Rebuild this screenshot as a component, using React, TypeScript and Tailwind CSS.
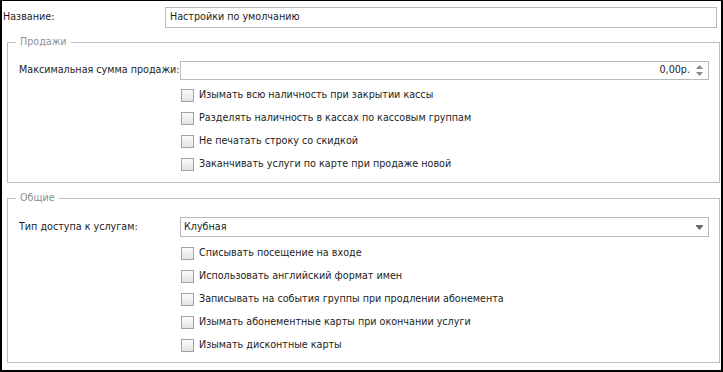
import type { ReactNode } from 'react';

const salesOptions = [
  'Изымать всю наличность при закрытии кассы',
  'Разделять наличность в кассах по кассовым группам',
  'Не печатать строку со скидкой',
  'Заканчивать услуги по карте при продаже новой',
];

const commonOptions = [
  'Списывать посещение на входе',
  'Использовать английский формат имен',
  'Записывать на события группы при продлении абонемента',
  'Изымать абонементные карты при окончании услуги',
  'Изымать дисконтные карты',
];

function CheckRow({ label }: { label: string }) {
  return (
    <div className="flex h-[23px] items-center pl-[162px]">
      <span className="h-[13px] w-[13px] shrink-0 border border-[#a2a2a2] bg-gradient-to-b from-[#fbfbfb] to-[#e4e4e4]" />
      <span className="ml-[5px] whitespace-nowrap">{label}</span>
    </div>
  );
}

function Group({ title, className, children }: { title: string; className: string; children: ReactNode }) {
  return (
    <fieldset className={`ml-[5px] w-[713px] border border-[#bdbdbd] pl-[11px] pr-[8px] ${className}`}>
      <legend className="ml-[-3px] px-[4px] leading-[14px] text-[#8f8f8f]">{title}</legend>
      {children}
    </fieldset>
  );
}

export default function App() {
  return (
    <div className="h-[372px] w-[723px] border-x-2 border-t border-b-2 border-black bg-white font-['DejaVu_Sans',sans-serif] text-[9.6px] text-[#1c1c1c]">
      <div className="mt-[6px] flex h-[21px] items-center">
        <span className="w-[163px] shrink-0 pl-[1px]">Название:</span>
        <div className="flex h-[21px] w-[552px] items-center border border-[#b9b9b9] pl-[4px]">
          Настройки по умолчанию
        </div>
      </div>

      <Group title="Продажи" className="mt-[7px] pb-[6px]">
        <div className="mt-[12px] flex h-[19px] items-center">
          <span className="w-[161px] shrink-0 whitespace-nowrap">Максимальная сумма продажи:</span>
          <div className="flex h-[19px] w-[529px] items-center justify-end border border-[#b9b9b9]">
            <span>0,00р.</span>
            <div className="ml-[5px] mr-[4px] flex w-[9px] flex-col items-center gap-[3px]">
              <svg width="7" height="4" viewBox="0 0 7 4">
                <path d="M3.5 0 L7 4 L0 4 Z" fill="#8a8a8a" />
              </svg>
              <svg width="7" height="4" viewBox="0 0 7 4">
                <path d="M0 0 L7 0 L3.5 4 Z" fill="#8a8a8a" />
              </svg>
            </div>
          </div>
        </div>
        <div className="mt-[4px]">
          {salesOptions.map((o) => (
            <CheckRow key={o} label={o} />
          ))}
        </div>
      </Group>

      <Group title="Общие" className="mt-[8px] pb-[5px]">
        <div className="mt-[12px] flex h-[20px] items-center">
          <span className="w-[161px] shrink-0 whitespace-nowrap">Тип доступа к услугам:</span>
          <div className="flex h-[20px] w-[529px] items-center justify-between border border-[#b9b9b9] pl-[3px] pr-[5px]">
            <span>Клубная</span>
            <svg width="7" height="5" viewBox="0 0 7 5">
              <rect x="0" y="0" width="7" height="1" fill="#6a6a6a" />
              <path d="M0 1 L7 1 L3.5 5 Z" fill="#6a6a6a" />
            </svg>
          </div>
        </div>
        <div className="mt-[5px]">
          {commonOptions.map((o) => (
            <CheckRow key={o} label={o} />
          ))}
        </div>
      </Group>
    </div>
  );
}
